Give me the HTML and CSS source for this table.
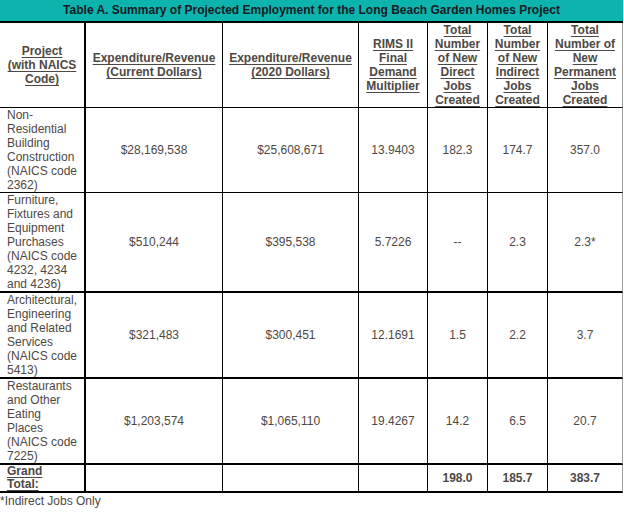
FILE: index.html
```html
<!DOCTYPE html>
<html>
<head>
<meta charset="utf-8">
<link rel="stylesheet" href="styles.css">
</head>
<body>
<div class="title">Table A. Summary of Projected Employment for the Long Beach Garden Homes Project</div>
<table class="grid">
  <thead>
    <tr class="row-head">
      <th class="c1"><u>Project (with NAICS Code)</u></th>
      <th class="c2"><u>Expenditure/Revenue (Current Dollars)</u></th>
      <th class="c3"><u>Expenditure/Revenue (2020 Dollars)</u></th>
      <th class="c4"><u>RIMS II Final Demand Multiplier</u></th>
      <th class="c5"><u>Total Number of New Direct Jobs Created</u></th>
      <th class="c6"><u>Total Number of New Indirect Jobs Created</u></th>
      <th class="c7"><u>Total Number of New Permanent Jobs Created</u></th>
    </tr>
  </thead>
  <tbody>
    <tr class="row-thin">
      <td class="c1">Non-Residential Building Construction (NAICS code 2362)</td>
      <td>$28,169,538</td>
      <td>$25,608,671</td>
      <td>13.9403</td>
      <td>182.3</td>
      <td>174.7</td>
      <td class="c7">357.0</td>
    </tr>
    <tr>
      <td class="c1">Furniture, Fixtures and Equipment Purchases (NAICS code 4232, 4234 and 4236)</td>
      <td>$510,244</td>
      <td>$395,538</td>
      <td>5.7226</td>
      <td>--</td>
      <td>2.3</td>
      <td class="c7">2.3*</td>
    </tr>
    <tr>
      <td class="c1">Architectural, Engineering and Related Services (NAICS code 5413)</td>
      <td>$321,483</td>
      <td>$300,451</td>
      <td>12.1691</td>
      <td>1.5</td>
      <td>2.2</td>
      <td class="c7">3.7</td>
    </tr>
    <tr>
      <td class="c1">Restaurants and Other Eating Places (NAICS code 7225)</td>
      <td>$1,203,574</td>
      <td>$1,065,110</td>
      <td>19.4267</td>
      <td>14.2</td>
      <td>6.5</td>
      <td class="c7">20.7</td>
    </tr>
    <tr class="row-total">
      <td class="c1"><u>Grand<br>Total:</u></td>
      <td></td>
      <td></td>
      <td></td>
      <td>198.0</td>
      <td>185.7</td>
      <td class="c7">383.7</td>
    </tr>
  </tbody>
</table>
<p class="note">*Indirect Jobs Only</p>
</body>
</html>
```
FILE: styles.css
```css
html, body {
  margin: 0;
  padding: 0;
  background: #ffffff;
}

body {
  font-family: "Liberation Sans", Arial, sans-serif;
  font-size: 12px;
  line-height: 14px;
  color: #4e4844;
}

.title {
  width: 623px;
  height: 21px;
  line-height: 21px;
  background: #0db3ad;
  border-bottom: 2px solid #000;
  text-align: center;
  font-weight: bold;
  color: #151a24;
}

.grid {
  width: 623px;
  table-layout: fixed;
  border-collapse: separate;
  border-spacing: 0;
}

.grid th,
.grid td {
  box-sizing: border-box;
  padding: 0 2px;
  text-align: center;
  vertical-align: middle;
  border-right: 1px solid #000;
  border-bottom: 2px solid #000;
}

.grid th {
  font-weight: bold;
  height: 85px;
  border-bottom-width: 1px;
}

.grid th u,
.row-total u {
  text-decoration: underline;
  text-underline-offset: 2px;
}

.grid .c1 {
  width: 86px;
  text-align: left;
  padding: 0 6px 0 7px;
  border-right-width: 2px;
}

.grid th.c1 {
  text-align: center;
  padding: 0 7px;
}

.c2 { width: 137px; }
.c3 { width: 136px; }
.c4 { width: 69px; }
.c5 { width: 60px; }
.c6 { width: 60px; }
.grid .c7 {
  width: 75px;
  border-right-color: #a0a0a0;
}

.row-thin td {
  border-bottom-width: 1px;
}

.row-total td {
  font-weight: bold;
  line-height: 13px;
  height: 28px;
}

.note {
  margin: 0;
  padding-top: 1px;
}
```
